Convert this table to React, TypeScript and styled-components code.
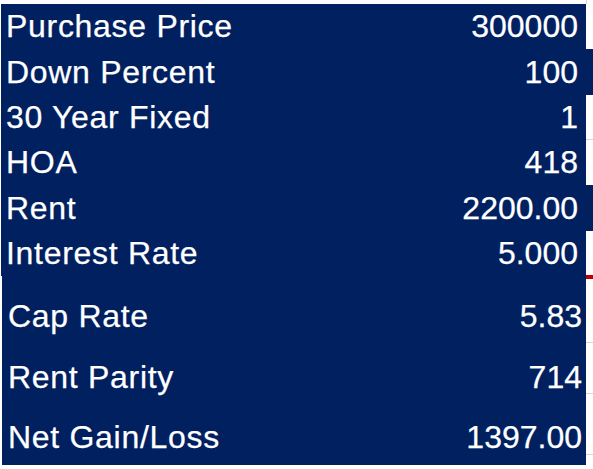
import React, {FC} from "react";
import styled, {createGlobalStyle} from "styled-components";

// spreadsheet style summary: dark blue cells, white Arial-like text

const NAVY = "#002060";
const GRID = "#d6d6d6";

const GlobalStyle = createGlobalStyle`
  html, body {
    margin: 0;
    padding: 0;
    background: #ffffff;
  }
  body {
    font-family: "Liberation Sans", Arial, sans-serif;
  }
`;

const Sheet = styled.div`
  display: flex;
  width: 593px;
  height: 469px;
  overflow: hidden;
  background: #ffffff;
`;

const MainCol = styled.div`
  width: 586px;
  display: flex;
  flex-direction: column;
`;

const TopStrip = styled.div`
  height: 4px;
`;

const TopBlock = styled.div`
  margin-left: 1px;
  background: ${NAVY};
  display: flex;
  flex-direction: column;
`;

const LowerBlock = styled.div`
  margin-left: 2px;
  background: ${NAVY};
  padding: 3px 0 4.5px 0;
  display: flex;
  flex-direction: column;
`;

const Row = styled.div<{ $h: number; $tall?: boolean }>`
  height: ${(p) => p.$h}px;
  display: flex;
  align-items: flex-end;
  justify-content: space-between;
  color: #ffffff;
  font-size: 32px;
  line-height: 32px;
  -webkit-text-stroke: 0.25px #ffffff;
  padding: 0 ${(p) => (p.$tall ? 4 : 8)}px 7.5px ${(p) => (p.$tall ? 6 : 5)}px;
  box-sizing: border-box;
  white-space: nowrap;
`;

const Label = styled.span`
  letter-spacing: 0.7px;
`;

const Value = styled.span`
  text-align: right;
`;

const Gutter = styled.div`
  width: 7px;
  display: flex;
  flex-direction: column;
`;

const GutterCell = styled.div<{ $h: number; $bg: string; $line?: boolean; $edge?: boolean }>`
  height: ${(p) => p.$h}px;
  flex-shrink: 0;
  background: ${(p) => p.$bg};
  box-sizing: border-box;
  border-bottom: ${(p) => (p.$line ? `1px solid ${GRID}` : "none")};
  border-left: ${(p) => (p.$edge ? `1px solid ${GRID}` : "none")};
`;

interface Item {
  label: string;
  value: string;
  h: number;
}

const topRows: Item[] = [
  {label: "Purchase Price", value: "300000", h: 45},
  {label: "Down Percent", value: "100", h: 46},
  {label: "30 Year Fixed", value: "1", h: 45},
  {label: "HOA", value: "418", h: 45},
  {label: "Rent", value: "2200.00", h: 46},
  {label: "Interest Rate", value: "5.000", h: 45},
];

const lowerRows: Item[] = [
  {label: "Cap Rate", value: "5.83", h: 60.5},
  {label: "Rent Parity", value: "714", h: 60.5},
  {label: "Net Gain/Loss", value: "1397.00", h: 60.5},
];

const gutter = [
  {h: 4, bg: "#ffffff", edge: true},
  {h: 45, bg: "#ffffff"},
  {h: 46, bg: NAVY},
  {h: 45, bg: "#ffffff", line: true},
  {h: 45, bg: "#ffffff"},
  {h: 46, bg: NAVY},
  {h: 44, bg: "#ffffff"},
  {h: 4, bg: "#c00000"},
  {h: 64, bg: "#ffffff", line: true},
  {h: 51, bg: "#ffffff", line: true},
  {h: 61, bg: "#ffffff", line: true},
  {h: 14, bg: "#ffffff"},
];

const App: FC = () => {
  return (
    <>
      <GlobalStyle/>
      <Sheet>
        <MainCol>
          <TopStrip/>
          <TopBlock>
            {topRows.map((row, index) => (
              <Row key={index} $h={row.h}>
                <Label>{row.label}</Label>
                <Value>{row.value}</Value>
              </Row>
            ))}
          </TopBlock>
          <LowerBlock>
            {lowerRows.map((row, index) => (
              <Row key={index} $h={row.h} $tall>
                <Label>{row.label}</Label>
                <Value>{row.value}</Value>
              </Row>
            ))}
          </LowerBlock>
        </MainCol>
        <Gutter>
          {gutter.map((g, index) => (
            <GutterCell key={index} $h={g.h} $bg={g.bg} $line={g.line} $edge={g.edge}/>
          ))}
        </Gutter>
      </Sheet>
    </>
  );
};

export default App;
